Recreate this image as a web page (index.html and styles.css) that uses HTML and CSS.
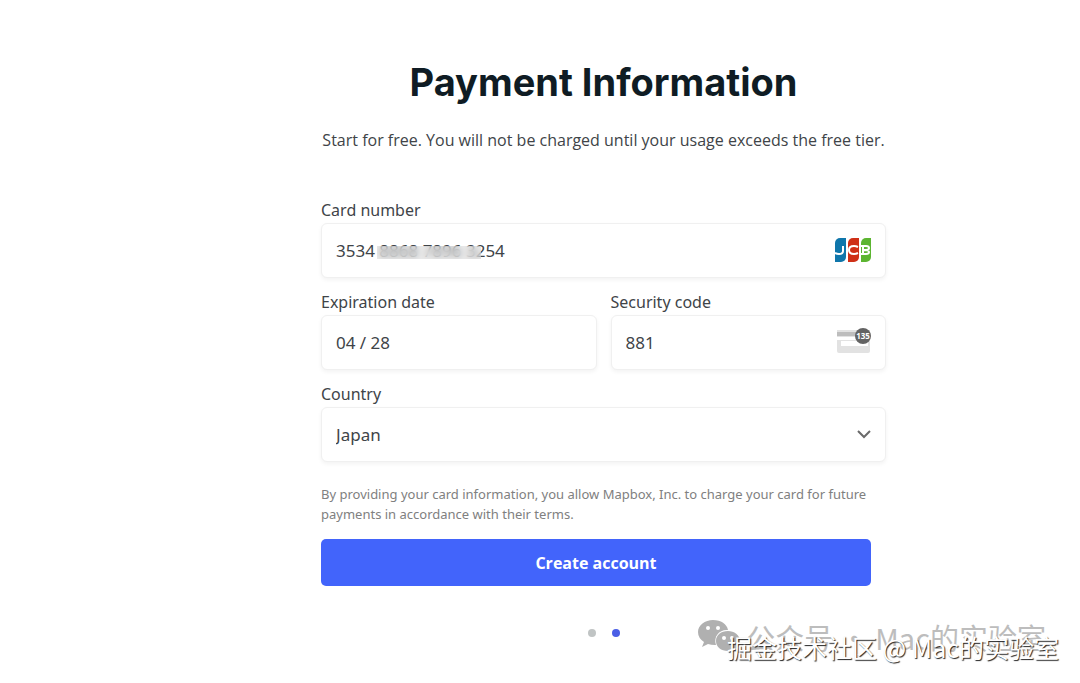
FILE: index.html
```html
<!DOCTYPE html>
<html lang="en">

<head>
    <meta charset="UTF-8">
    <meta name="viewport" content="width=device-width, initial-scale=1.0">
    <title>Payment Information</title>
    <link rel="stylesheet" href="styles.css">
</head>

<body>
    <main class="payment">
        <h1>Payment Information</h1>
        <p class="intro">Start for free. You will not be charged until your usage exceeds the free tier.</p>

        <form class="payment-form">
            <div class="field">
                <label for="card">Card number</label>
                <div class="control">
                    <input type="text" id="card" value="3534 8868 7896 3254">
                    <span class="card-mask"></span>
                    <svg class="brand" viewBox="0 0 38 26" aria-hidden="true">
                        <path fill="#0f76ab" d="M6 1h6v19a5 5 0 0 1-5 5H1V6a5 5 0 0 1 5-5z" />
                        <path fill="#cf3017" d="M19 1h6v19a5 5 0 0 1-5 5h-6V6a5 5 0 0 1 5-5z" />
                        <path fill="#5cb531" d="M32 1h5v19a5 5 0 0 1-5 5h-5V6a5 5 0 0 1 5-5z" />
                        <g fill="none" stroke="#fff" stroke-width="2">
                            <path d="M9 9v5q0 3-4 3-2 0-4-1" />
                            <path d="M24 10q-2-1-4-1-5 0-5 4t5 4q2 0 4-1" />
                            <path d="M27 9h5q3 0 3 2t-3 2h-3q6 0 6 2t-3 2h-5M29 9v8" />
                        </g>
                    </svg>
                </div>
            </div>

            <div class="row">
                <div class="field">
                    <label for="expiry">Expiration date</label>
                    <div class="control">
                        <input type="text" id="expiry" value="04 / 28">
                    </div>
                </div>
                <div class="field">
                    <label for="cvc">Security code</label>
                    <div class="control">
                        <input type="text" id="cvc" value="881">
                        <svg class="cvc-icon" viewBox="0 0 36 26" aria-hidden="true">
                            <path fill="#e2e2e2" d="M1 3h32q1 0 1 1v20q0 2-2 2H3q-2 0-2-2V3z" />
                            <path fill="#bdbdbd" d="M1 5h32v4H1z" />
                            <path fill="#fff" d="M1 10h33v3H1zM5 14h27v5H5z" />
                            <circle cx="27" cy="9" r="8" fill="#636363" />
                            <text x="27" y="12">135</text>
                        </svg>
                    </div>
                </div>
            </div>

            <div class="field">
                <label for="country">Country</label>
                <div class="control">
                    <select id="country">
                        <option>Japan</option>
                    </select>
                    <svg class="chevron" viewBox="0 0 16 10" aria-hidden="true">
                        <path d="M2 2l6 6 6-6" />
                    </svg>
                </div>
            </div>

            <p class="terms">By providing your card information, you allow Mapbox, Inc. to charge your card for future payments in accordance with their terms.</p>
            <button type="submit">Create account</button>
        </form>

        <div class="steps">
            <span class="dot"></span>
            <span class="dot active"></span>
        </div>
    </main>

    <div class="account" lang="zh-CN">
        <svg viewBox="0 0 42 34" aria-hidden="true">
            <path fill="#b0b0b0" d="M15 0C7 0 0 5 0 12q0 6 6 10l-2 5 6-3q3 1 7 1h1C15 16 22 9 30 10 29 4 23 0 15 0z" />
            <path fill="#b0b0b0" d="M30 11c-7 0-12 4-12 10s5 10 12 10q2 0 5-1l5 3-2-4q4-3 4-8c0-6-6-10-12-10z" />
            <g fill="#fff">
                <circle cx="10" cy="8" r="2" />
                <circle cx="20" cy="8" r="2" />
                <circle cx="26" cy="18" r="2" />
                <circle cx="34" cy="18" r="2" />
            </g>
        </svg>
        <span>公众号 · Mac的实验室</span>
    </div>
    <div class="community" lang="zh-CN">掘金技术社区 @ Mac的实验室</div>
</body>

</html>
```

FILE: styles.css
```css
* {
    box-sizing: border-box;
}

body {
    margin: 0;
    background: #fff;
    color: #404448;
    font-family: "Noto Sans", "Open Sans", sans-serif;
}

.payment {
    max-width: 692px;
    margin: 0 auto;
    padding: 56px 0 40px 127px;
}

h1 {
    margin: 0;
    color: #0f1c24;
    font-family: Inter, sans-serif;
    font-size: 38px;
    font-weight: 700;
    line-height: 52px;
    text-align: center;
}

.intro {
    margin: 20px 0 46px;
    font-family: "Open Sans", sans-serif;
    font-size: 16px;
    line-height: 24px;
    text-align: center;
}

.payment-form {
    display: flex;
    flex-direction: column;
    gap: 12px;
}

.row {
    display: grid;
    grid-template-columns: 1fr 1fr;
    gap: 14px;
}

.field {
    display: flex;
    flex-direction: column;
    align-items: flex-start;
}

label {
    font-size: 16px;
    line-height: 25px;
}

.control {
    position: relative;
    width: 100%;
}

input,
select {
    display: block;
    width: 100%;
    height: 55px;
    padding: 0 14px;
    border: 1px solid #f0f0f0;
    border-radius: 6px;
    background: #fff;
    box-shadow: 0 2px 4px rgba(0, 0, 0, 0.05);
    color: #404448;
    font-family: inherit;
    font-size: 17px;
    appearance: none;
}

.brand,
.cvc-icon,
.chevron {
    position: absolute;
    right: 14px;
    top: 14px;
}

.brand {
    width: 38px;
    height: 26px;
}

.cvc-icon {
    top: 12px;
    width: 36px;
    height: 26px;
}

.cvc-icon text {
    fill: #fff;
    font-size: 8px;
    font-weight: 700;
    text-anchor: middle;
}

.chevron {
    top: 22px;
    width: 16px;
    height: 10px;
    fill: none;
    stroke: #6a6a6a;
    stroke-width: 2;
    pointer-events: none;
}

/* hides the middle digits of the card number */
.card-mask {
    position: absolute;
    left: 56px;
    top: 23px;
    width: 104px;
    height: 13px;
    background: rgba(215, 215, 215, 0.5);
    backdrop-filter: blur(3px);
}

.terms {
    margin: 10px 0 3px;
    color: #808080;
    font-size: 13px;
    line-height: 20px;
}

button {
    height: 47px;
    margin-right: 15px;
    border: none;
    border-radius: 5px;
    background: #4264fb;
    color: #fff;
    font-family: "Open Sans", sans-serif;
    font-size: 16px;
    font-weight: 700;
    cursor: pointer;
}

.steps {
    display: flex;
    justify-content: center;
    gap: 16px;
    margin-top: 43px;
}

.dot {
    width: 8px;
    height: 8px;
    border-radius: 50%;
    background: #c0c4c4;
}

.dot.active {
    background: #4a5ee6;
}

.account,
.community {
    position: absolute;
    font-family: "Noto Sans CJK SC", sans-serif;
    white-space: nowrap;
}

.account {
    right: 34px;
    bottom: 26px;
    display: flex;
    align-items: center;
    gap: 6px;
    color: #bdbdbd;
    font-size: 29px;
    line-height: 40px;
}

.account svg {
    width: 42px;
    height: 34px;
}

.community {
    right: 21px;
    bottom: 18px;
    color: #fff;
    font-size: 25px;
    line-height: 36px;
    text-shadow: 1px 1px 1px #222;
}
```
